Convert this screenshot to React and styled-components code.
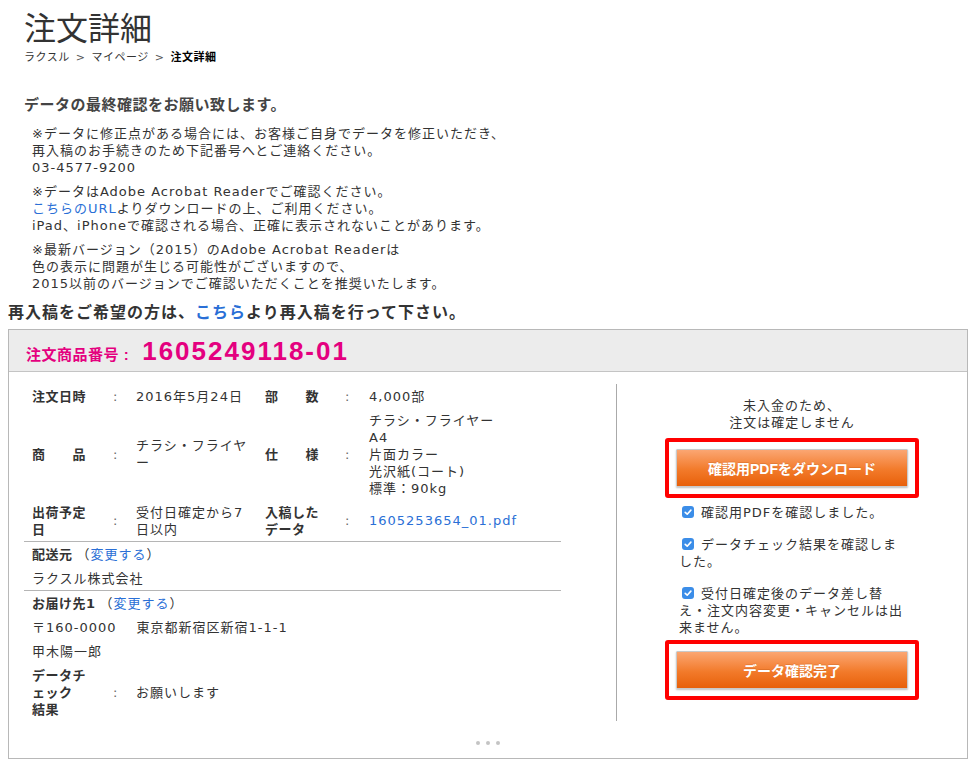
import React from 'react';
import styled, { createGlobalStyle } from 'styled-components';

const GlobalStyle = createGlobalStyle`
  body {
    margin: 0;
    background: #fff;
    color: #333;
    font-family: "DejaVu Sans", "Noto Sans CJK JP", sans-serif;
  }
`;

const Page = styled.div`
  padding: 6px 8px 0;
`;

const Title = styled.h1`
  margin: 0;
  padding-left: 16px;
  font-family: "Noto Sans CJK JP", sans-serif;
  font-size: 32px;
  font-weight: normal;
  line-height: 40px;
  color: #333;
`;

const Breadcrumb = styled.div`
  padding: 2px 0 0 16px;
  font-size: 11px;
  line-height: 20px;
  letter-spacing: 0.5px;
  color: #333;

  strong {
    color: #000;
  }
`;

const Sep = styled.span`
  margin: 0 6px;
  color: #555;
`;

const Notice = styled.section`
  margin-top: 27px;
  padding-left: 16px;
`;

const NoticeTitle = styled.h2`
  margin: 0;
  font-size: 15px;
  line-height: 20px;
  letter-spacing: 0.5px;
  font-weight: bold;
  color: #444;
`;

const NoteList = styled.div`
  margin-top: 10px;
  padding-left: 8px;
  display: flex;
  flex-direction: column;
  gap: 7px;
`;

const Note = styled.p`
  margin: 0;
  font-size: 13px;
  line-height: 17px;
  letter-spacing: 1px;
  color: #333;
`;

const TextLink = styled.a`
  color: #2a6fd6;
  text-decoration: none;
`;

const Lead = styled.p`
  margin: 10px 0 0;
  font-size: 16px;
  line-height: 22px;
  letter-spacing: 1px;
  font-weight: bold;
  color: #333;
`;

const Card = styled.div`
  margin-top: 5px;
  border: 1px solid #b8b8b8;
`;

const CardHeader = styled.div`
  height: 42px;
  box-sizing: border-box;
  padding-left: 17px;
  background: #ececec;
  border-bottom: 1px solid #c4c4c4;
  display: flex;
  align-items: baseline;
  color: #e4007f;
  font-family: "Liberation Sans", "Noto Sans CJK JP", sans-serif;
  font-weight: bold;
  line-height: 42px;
`;

const OrderLabel = styled.span`
  font-size: 15px;
  letter-spacing: 0.5px;
`;

const OrderNumber = styled.span`
  margin-left: 13px;
  font-size: 26px;
  letter-spacing: 2px;
`;

const CardBody = styled.div`
  display: flex;
  padding-top: 12px;
`;

const LeftCol = styled.div`
  width: 607px;
  box-sizing: border-box;
  padding: 0 55px 0 15px;
`;

const RightCol = styled.div`
  flex: 1;
  border-left: 1px solid #aaa;
  padding: 13px 0 21px;
  display: flex;
  flex-direction: column;
  align-items: center;
`;

const SpecGrid = styled.div`
  display: grid;
  grid-template-columns: 81px 23px 129px 80px 24px 1fr;
  align-items: center;
  padding-left: 8px;
  border-bottom: 1px solid #b5b5b5;
`;

const Label = styled.div`
  max-width: 56px;
  padding: 3.5px 0;
  font-size: 13px;
  line-height: 17px;
  letter-spacing: 0.5px;
  font-weight: bold;
  color: #333;
`;

const Colon = styled.div`
  font-size: 13px;
  color: #666;
`;

const Value = styled.div`
  padding: 3.5px ${(p) => (p.$narrow ? '13px' : '0')} 3.5px 0;
  font-size: 13px;
  line-height: 17px;
  letter-spacing: 1px;
  color: #333;
  line-break: loose;
`;

const Block = styled.div`
  padding-left: 8px;
  border-bottom: ${(p) => (p.$divided ? '1px solid #b5b5b5' : 'none')};
`;

const Line = styled.div`
  padding: 3.5px 0;
  font-size: 13px;
  line-height: 17px;
  letter-spacing: 1px;
  color: #333;

  strong {
    letter-spacing: 0.5px;
    margin-right: 4px;
  }
`;

const Gap = styled.span`
  display: inline-block;
  width: 20px;
`;

const CheckRow = styled.div`
  display: grid;
  grid-template-columns: 81px 23px 1fr;
  align-items: center;
`;

const Status = styled.p`
  margin: 0;
  text-align: center;
  font-size: 13px;
  line-height: 17px;
  letter-spacing: 1px;
  color: #333;
`;

const ActionFrame = styled.div`
  margin-top: ${(p) => p.$top}px;
  width: 232px;
  padding: 7px;
  border: 4px solid #f00;
  border-radius: 3px;
`;

const ActionButton = styled.button`
  display: block;
  width: 100%;
  height: 38px;
  border: 1px solid #c9c9c9;
  border-radius: 1px;
  background: linear-gradient(#fba672, #f27a2a 55%, #e8600a);
  box-shadow: 0 1px 2px rgba(0, 0, 0, 0.25);
  color: #fff;
  font-family: "Liberation Sans", "Noto Sans CJK JP", sans-serif;
  font-size: 14px;
  font-weight: bold;
  text-shadow: 0 -1px 0 rgba(150, 60, 0, 0.2);
  cursor: pointer;
`;

const CheckList = styled.div`
  width: 226px;
  margin-top: 6.5px;
  display: flex;
  flex-direction: column;
  gap: 15px;
`;

const CheckItem = styled.label`
  font-size: 13px;
  line-height: 17px;
  letter-spacing: 1px;
  color: #333;
  line-break: loose;
`;

const Box = styled.span`
  display: inline-block;
  width: 12px;
  height: 12px;
  margin: 0 7px 0 3px;
  border-radius: 3px;
  background: #3b8de8;
  vertical-align: -1px;

  svg {
    display: block;
  }
`;

const More = styled.div`
  display: flex;
  justify-content: center;
  gap: 6px;
  padding: 20px 0 13px;
`;

const Dot = styled.span`
  width: 4px;
  height: 4px;
  border-radius: 50%;
  background: #c4c4c4;
`;

const Check = ({ children }) => (
  <CheckItem>
    <Box>
      <svg width="12" height="12" viewBox="0 0 12 12">
        <path d="M3.2 6.3 L5.2 8.2 L8.9 4.1" fill="none" stroke="#fff" strokeWidth="1.6" strokeLinecap="round" strokeLinejoin="round" />
      </svg>
    </Box>
    {children}
  </CheckItem>
);

const App = () => (
  <>
    <GlobalStyle />
    <Page>
      <Title>注文詳細</Title>
      <Breadcrumb>
        ラクスル<Sep>&gt;</Sep>マイページ<Sep>&gt;</Sep><strong>注文詳細</strong>
      </Breadcrumb>

      <Notice>
        <NoticeTitle>データの最終確認をお願い致します。</NoticeTitle>
        <NoteList>
          <Note>
            ※データに修正点がある場合には、お客様ご自身でデータを修正いただき、<br />
            再入稿のお手続きのため下記番号へとご連絡ください。<br />
            03-4577-9200
          </Note>
          <Note>
            ※データはAdobe Acrobat Readerでご確認ください。<br />
            <TextLink href="#">こちらのURL</TextLink>よりダウンロードの上、ご利用ください。<br />
            iPad、iPhoneで確認される場合、正確に表示されないことがあります。
          </Note>
          <Note>
            ※最新バージョン（2015）のAdobe Acrobat Readerは<br />
            色の表示に問題が生じる可能性がございますので、<br />
            2015以前のバージョンでご確認いただくことを推奨いたします。
          </Note>
        </NoteList>
      </Notice>

      <Lead>
        再入稿をご希望の方は、<TextLink href="#">こちら</TextLink>より再入稿を行って下さい。
      </Lead>

      <Card>
        <CardHeader>
          <OrderLabel>注文商品番号 :</OrderLabel>
          <OrderNumber>1605249118-01</OrderNumber>
        </CardHeader>

        <CardBody>
          <LeftCol>
            <SpecGrid>
              <Label>注文日時</Label>
              <Colon>:</Colon>
              <Value $narrow>2016年5月24日</Value>
              <Label>部　　数</Label>
              <Colon>:</Colon>
              <Value>4,000部</Value>

              <Label>商　　品</Label>
              <Colon>:</Colon>
              <Value $narrow>チラシ・フライヤー</Value>
              <Label>仕　　様</Label>
              <Colon>:</Colon>
              <Value>
                チラシ・フライヤー<br />
                A4<br />
                片面カラー<br />
                光沢紙(コート)<br />
                標準：90kg
              </Value>

              <Label>出荷予定日</Label>
              <Colon>:</Colon>
              <Value $narrow>受付日確定から7日以内</Value>
              <Label>入稿したデータ</Label>
              <Colon>:</Colon>
              <Value>
                <TextLink href="#">1605253654_01.pdf</TextLink>
              </Value>
            </SpecGrid>

            <Block $divided>
              <Line>
                <strong>配送元</strong>（<TextLink href="#">変更する</TextLink>）
              </Line>
              <Line>ラクスル株式会社</Line>
            </Block>

            <Block>
              <Line>
                <strong>お届け先1</strong>（<TextLink href="#">変更する</TextLink>）
              </Line>
              <Line>
                〒160-0000<Gap />東京都新宿区新宿1-1-1
              </Line>
              <Line>甲木陽一郎</Line>
              <CheckRow>
                <Label>
                  データチ<br />ェック<br />結果
                </Label>
                <Colon>:</Colon>
                <Value>お願いします</Value>
              </CheckRow>
            </Block>
          </LeftCol>

          <RightCol>
            <Status>
              未入金のため、<br />
              注文は確定しません
            </Status>
            <ActionFrame $top={6.5}>
              <ActionButton type="button">確認用PDFをダウンロード</ActionButton>
            </ActionFrame>

            <CheckList>
              <Check>確認用PDFを確認しました。</Check>
              <Check>データチェック結果を確認しました。</Check>
              <Check>受付日確定後のデータ差し替え・注文内容変更・キャンセルは出来ません。</Check>
            </CheckList>

            <ActionFrame $top={3.5}>
              <ActionButton type="button">データ確認完了</ActionButton>
            </ActionFrame>
          </RightCol>
        </CardBody>

        <More>
          <Dot />
          <Dot />
          <Dot />
        </More>
      </Card>
    </Page>
  </>
);

export default App;
